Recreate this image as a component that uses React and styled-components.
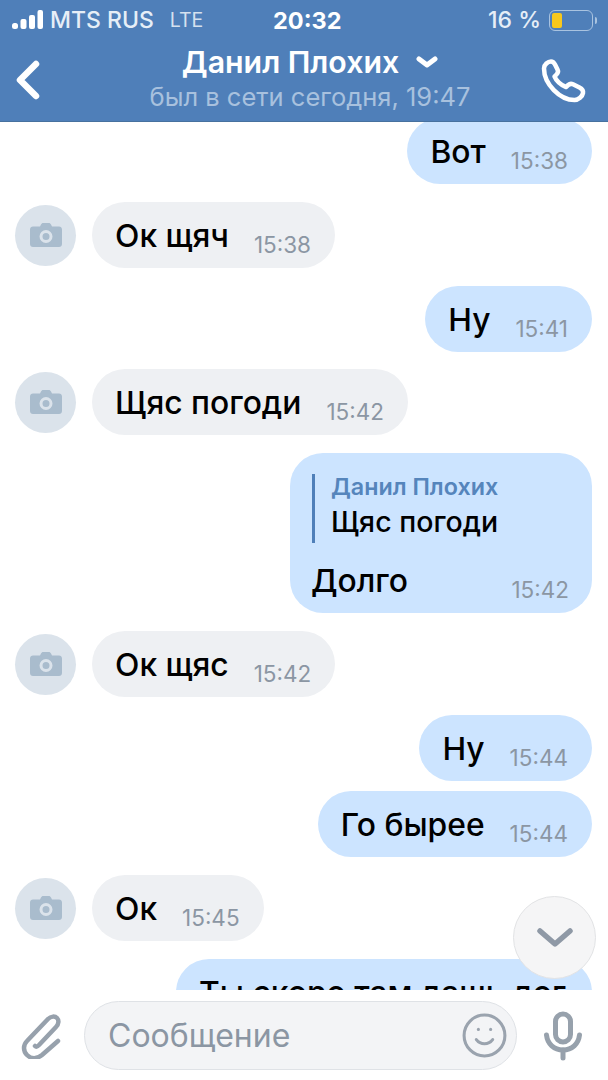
import React from "react";
import styled, { createGlobalStyle } from "styled-components";
import { Smile } from "lucide-react";

const Global = createGlobalStyle`
  html, body { margin: 0; padding: 0; background: #fff; }
  * { box-sizing: border-box; }
`;

const Screen = styled.div`
  position: relative;
  width: 608px;
  height: 1080px;
  display: flex;
  flex-direction: column;
  overflow: hidden;
  background: #fff;
  font-family: Inter, "Liberation Sans", sans-serif;
`;

const Header = styled.header`
  flex: none;
  height: 122px;
  background: #4f7fb9;
  border-bottom: 1px solid #47719f;
  color: #fff;
`;

const StatusBar = styled.div`
  height: 40px;
  padding: 0 15px 0 12px;
  display: grid;
  grid-template-columns: 261px auto 1fr;
  align-items: center;
  font-size: 23px;
  color: #e6eef7;
`;

const StatusLeft = styled.div`
  display: flex;
  align-items: center;
`;

const Carrier = styled.span`
  margin-left: 7px;
  font-weight: 500;
`;

const Network = styled.span`
  margin-left: 16px;
  font-size: 19.5px;
  font-weight: 400;
  color: #d5e1ef;
`;

const Clock = styled.span`
  font-size: 23.5px;
  font-weight: 700;
  color: #fff;
`;

const StatusRight = styled.div`
  display: flex;
  align-items: center;
  justify-content: flex-end;
  gap: 8px;
`;

const Percent = styled.span`
  font-weight: 500;
`;

const Battery = styled.div`
  position: relative;
  width: 44px;
  height: 21px;
  padding: 2px;
  border: 1.5px solid #a9c3e0;
  border-radius: 6px;
  &::after {
    content: "";
    position: absolute;
    right: -5px;
    top: 6px;
    width: 2px;
    height: 7px;
    border-radius: 0 2px 2px 0;
    background: #a9c3e0;
  }
`;

const BatteryLevel = styled.div`
  width: 10px;
  height: 100%;
  border-radius: 2px;
  background: #f8c81c;
`;

const NavBar = styled.div`
  height: 81px;
  padding: 0 21px 0 15px;
  display: grid;
  grid-template-columns: 64px 462px 46px;
  align-items: center;
`;

const TitleBlock = styled.div`
  display: flex;
  flex-direction: column;
  align-items: center;
  margin-top: -8px;
`;

const TitleRow = styled.div`
  display: flex;
  align-items: center;
  gap: 17px;
  font-size: 30.3px;
  line-height: 40px;
  font-weight: 600;
  white-space: nowrap;
`;

const Subtitle = styled.div`
  font-size: 25.5px;
  line-height: 30px;
  color: #a8c1de;
  white-space: nowrap;
`;

const Messages = styled.main`
  flex: 1;
  min-height: 0;
  overflow: hidden;
  padding: 0 16px 0 15px;
  display: flex;
  flex-direction: column;
`;

const Row = styled.div`
  flex: none;
  display: flex;
  align-items: center;
  justify-content: ${(p) => (p.$out ? "flex-end" : "flex-start")};
  margin-top: ${(p) => p.$gap}px;
`;

const Avatar = styled.div`
  flex: none;
  width: 61px;
  height: 61px;
  margin-right: 16px;
  border-radius: 50%;
  background: #dbe3eb;
  display: flex;
  align-items: center;
  justify-content: center;
`;

const Bubble = styled.div`
  display: flex;
  align-items: center;
  height: 66px;
  padding: 2px 24px 0 23px;
  border-radius: 33px;
  background: ${(p) => (p.$out ? "#cce4ff" : "#eef0f3")};
`;

const ClippedBubble = styled(Bubble)`
  width: 416px;
`;

const Text = styled.span`
  font-size: 31.8px;
  line-height: 36px;
  font-weight: 500;
  color: #000;
  white-space: nowrap;
`;

const Time = styled.span`
  margin: 18px 0 0 25px;
  font-size: 22.5px;
  line-height: 24px;
  color: #8b96a3;
  white-space: nowrap;
`;

const ReplyBubble = styled.div`
  width: 302px;
  height: 160px;
  padding: 21px 23px 0 22px;
  border-radius: 33px;
  background: #cce4ff;
`;

const Quote = styled.div`
  height: 69px;
  padding-left: 16px;
  border-left: 3px solid #4f7fb9;
  display: flex;
  flex-direction: column;
`;

const QuoteAuthor = styled.div`
  font-size: 23.3px;
  line-height: 30px;
  font-weight: 600;
  color: #5585bc;
  margin-top: -2px;
`;

const QuoteText = styled.div`
  font-size: 28.5px;
  line-height: 40px;
  font-weight: 500;
  color: #000;
`;

const ReplyFooter = styled.div`
  margin: 17px 0 0 -1px;
  display: flex;
  align-items: center;
  justify-content: space-between;
`;

const ScrollDown = styled.div`
  position: absolute;
  left: 513px;
  top: 896px;
  width: 83px;
  height: 83px;
  border-radius: 50%;
  border: 1px solid #e2e3e5;
  background: #f5f5f6;
  display: flex;
  align-items: center;
  justify-content: center;
`;

const InputBar = styled.footer`
  flex: none;
  height: 90px;
  padding: 11px 0 10px;
  background: #fff;
  display: grid;
  grid-template-columns: 84px 433px 91px;
  align-items: center;
  justify-items: center;
`;

const Composer = styled.div`
  width: 100%;
  height: 69px;
  padding: 0 7px 0 23px;
  border: 1.5px solid #dfe2e6;
  border-radius: 35px;
  background: #f3f4f6;
  display: flex;
  align-items: center;
  justify-content: space-between;
`;

const Placeholder = styled.span`
  font-size: 32px;
  color: #8b96a3;
`;

const CameraIcon = () => (
  <svg width="32" height="24" viewBox="0 0 32 24">
    <path
      fill="#a9bccd"
      fillRule="evenodd"
      d="M11 1.5C11.4.6 12.2 0 13.2 0h5.6c1 0 1.8.6 2.2 1.5L22 3.5h7c1.7 0 3 1.3 3 3V21c0 1.7-1.3 3-3 3H3c-1.7 0-3-1.3-3-3V6.5c0-1.7 1.3-3 3-3h7zM16 7a6.500 6.500 0 1 0 0 13 6.500 6.500 0 0 0 0-13zm0 3a3.500 3.500 0 1 1 0 7 3.500 3.500 0 0 1 0-7z"
    />
  </svg>
);

const In = ({ text, time, gap }) => (
  <Row $gap={gap}>
    <Avatar>
      <CameraIcon />
    </Avatar>
    <Bubble>
      <Text>{text}</Text>
      <Time>{time}</Time>
    </Bubble>
  </Row>
);

const Out = ({ text, time, gap }) => (
  <Row $out $gap={gap}>
    <Bubble $out>
      <Text>{text}</Text>
      <Time>{time}</Time>
    </Bubble>
  </Row>
);

export default function App() {
  return (
    <Screen>
      <Global />
      <Header>
        <StatusBar>
          <StatusLeft>
            <svg width="31" height="20" viewBox="0 0 31 20" fill="#fff">
              <rect x="0" y="13" width="6" height="6" rx="2.5" />
              <rect x="8.5" y="9" width="6" height="10" rx="2" />
              <rect x="17" y="5" width="6" height="14" rx="2" />
              <rect x="25.5" y="0" width="5.5" height="19" rx="2" />
            </svg>
            <Carrier>MTS RUS</Carrier>
            <Network>LTE</Network>
          </StatusLeft>
          <Clock>20:32</Clock>
          <StatusRight>
            <Percent>16 %</Percent>
            <Battery>
              <BatteryLevel />
            </Battery>
          </StatusRight>
        </StatusBar>
        <NavBar>
          <svg width="26" height="42" viewBox="0 0 26 42" fill="none">
            <path d="M21 4 5 20l16 16" stroke="#fff" strokeWidth="6.5" strokeLinecap="round" strokeLinejoin="round" />
          </svg>
          <TitleBlock>
            <TitleRow>
              <span>Данил Плохих</span>
              <svg width="22" height="12" viewBox="0 0 22 12" fill="none">
                <path d="M3 3l8 6 8-6" stroke="#fff" strokeWidth="5" strokeLinecap="round" strokeLinejoin="round" />
              </svg>
            </TitleRow>
            <Subtitle>был в сети сегодня, 19:47</Subtitle>
          </TitleBlock>
          <svg width="46" height="44" viewBox="0 0 46 44" fill="none">
            <path
              d="M3 9.5C3 5.5 7 2.5 10 2.5c2 0 3 1 4 3l2.5 5c1 2 .5 3.5-1 5l-2 2c1.5 4 6.5 9 11.5 10.5l2.2-2c1.5-1.3 3-1.5 4.8-.7l6.5 3.2c2.5 1.3 4 3 3.5 5.5-.6 3.5-4.5 7-8.5 7C19 41 3 25 3 9.5z"
              stroke="#fff"
              strokeWidth="4.5"
              strokeLinejoin="round"
            />
          </svg>
        </NavBar>
      </Header>
      <Messages>
        <Out text="Вот" time="15:38" gap={-4} />
        <In text="Ок щяч" time="15:38" gap={18} />
        <Out text="Ну" time="15:41" gap={18} />
        <In text="Щяс погоди" time="15:42" gap={17} />
        <Row $out $gap={18}>
          <ReplyBubble>
            <Quote>
              <QuoteAuthor>Данил Плохих</QuoteAuthor>
              <QuoteText>Щяс погоди</QuoteText>
            </Quote>
            <ReplyFooter>
              <Text>Долго</Text>
              <Time>15:42</Time>
            </ReplyFooter>
          </ReplyBubble>
        </Row>
        <In text="Ок щяс" time="15:42" gap={18} />
        <Out text="Ну" time="15:44" gap={18} />
        <Out text="Го бырее" time="15:44" gap={10} />
        <In text="Ок" time="15:45" gap={18} />
        <Row $out $gap={18}>
          <ClippedBubble $out>
            <Text>Ты скоро там дашь дог</Text>
          </ClippedBubble>
        </Row>
      </Messages>
      <ScrollDown>
        <svg width="36" height="22" viewBox="0 0 36 22" fill="none">
          <path d="M3 4l15 13L33 4" stroke="#8f99a6" strokeWidth="5.5" strokeLinecap="round" strokeLinejoin="round" />
        </svg>
      </ScrollDown>
      <InputBar>
        <svg width="42" height="46" viewBox="0 0 42 46" fill="none">
          <path
            d="M37 28 21 42c-5 4-11 4-15 0s-4-10 0-14L27 6c3-3 7-3 9-1s2 6-1 9L18 32c-2 2-3 2-4 1"
            stroke="#97a1ac"
            strokeWidth="4.5"
            strokeLinecap="round"
            strokeLinejoin="round"
          />
        </svg>
        <Composer>
          <Placeholder>Сообщение</Placeholder>
          <Smile size={49} color="#9aa3ae" strokeWidth={1.5} />
        </Composer>
        <svg width="38" height="50" viewBox="0 0 38 50" fill="none">
          <rect x="11.5" y="3" width="15" height="28" rx="7.5" stroke="#97a1ac" strokeWidth="5" />
          <path d="M2.5 24c1 9 7.5 15 16.5 15s15.500-6 16.500-15" stroke="#97a1ac" strokeWidth="5" strokeLinecap="round" />
          <path d="M19 39v8" stroke="#97a1ac" strokeWidth="5" strokeLinecap="round" />
        </svg>
      </InputBar>
    </Screen>
  );
}
